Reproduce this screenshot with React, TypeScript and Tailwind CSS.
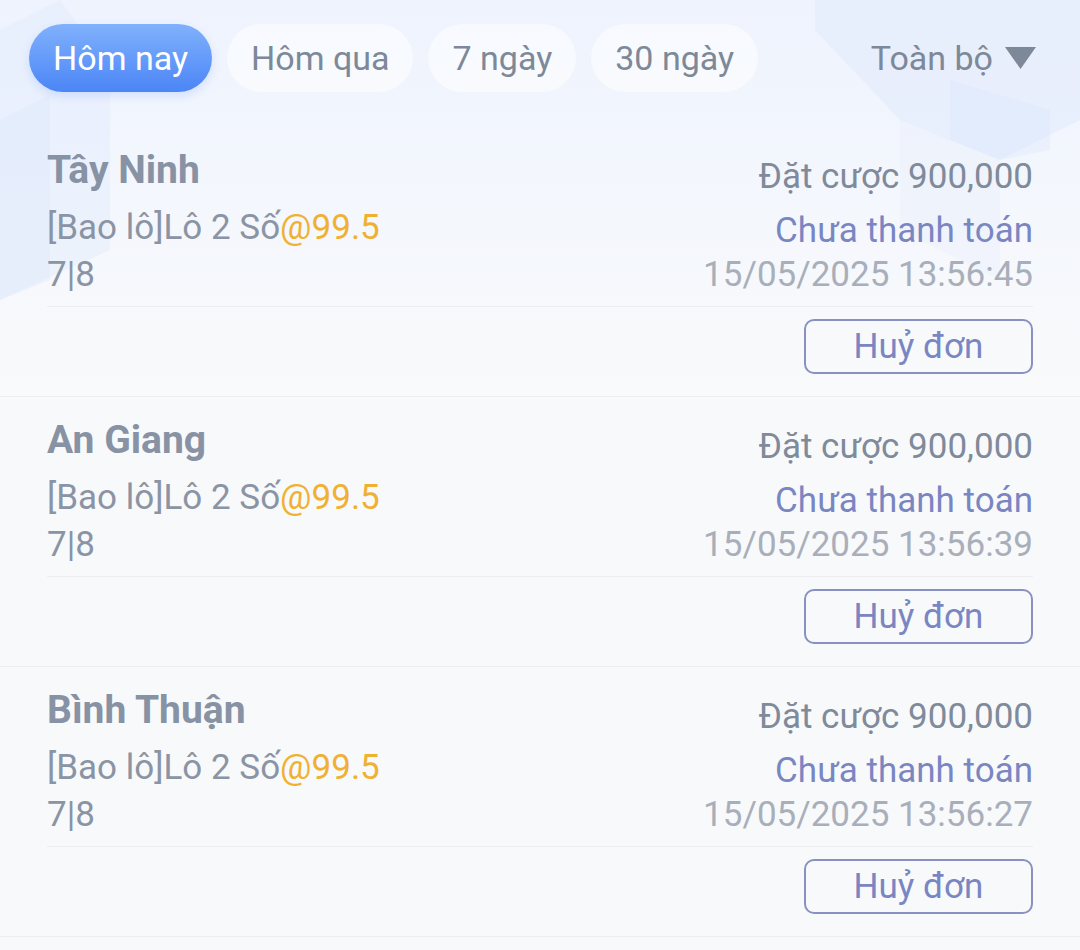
import { useState } from "react";

type Bet = {
  province: string;
  market: string;
  odds: string;
  numbers: string;
  amount: string;
  status: string;
  time: string;
};

const tabs = ["Hôm nay", "Hôm qua", "7 ngày", "30 ngày"];

const bets: Bet[] = [
  {
    province: "Tây Ninh",
    market: "[Bao lô]Lô 2 Số",
    odds: "@99.5",
    numbers: "7|8",
    amount: "900,000",
    status: "Chưa thanh toán",
    time: "15/05/2025 13:56:45",
  },
  {
    province: "An Giang",
    market: "[Bao lô]Lô 2 Số",
    odds: "@99.5",
    numbers: "7|8",
    amount: "900,000",
    status: "Chưa thanh toán",
    time: "15/05/2025 13:56:39",
  },
  {
    province: "Bình Thuận",
    market: "[Bao lô]Lô 2 Số",
    odds: "@99.5",
    numbers: "7|8",
    amount: "900,000",
    status: "Chưa thanh toán",
    time: "15/05/2025 13:56:27",
  },
];

export default function App() {
  const [activeTab, setActiveTab] = useState(0);

  return (
    <div className="relative min-h-[950px] w-full overflow-hidden bg-[#f8f9fb] font-['Roboto','Noto_Sans',sans-serif]">
      {/* soft blue backdrop behind the header */}
      <div className="absolute inset-x-0 top-0 h-[400px] bg-gradient-to-b from-[#eef3fd] via-[#f4f7fd] to-[#f9fafb]" />
      <svg className="absolute left-0 top-0" width="1080" height="400" viewBox="0 0 1080 400">
        <polygon points="0,30 60,0 110,70 110,250 0,300" fill="#dde8fb" opacity="0.35" />
        <polygon points="0,120 50,95 50,280 0,300" fill="#d4e2fb" opacity="0.25" />
        <polygon points="815,0 1080,0 1080,120 1000,160 900,120 815,30" fill="#dce7fb" opacity="0.4" />
        <polygon points="950,80 1050,110 1050,150 1000,160 950,140" fill="#d6e3fb" opacity="0.3" />
        <polygon points="900,120 1000,160 1000,280 900,230" fill="#e3ebfc" opacity="0.3" />
      </svg>

      <div className="relative">
        <div className="mb-[35px] mt-[24px] flex h-[68px] items-center pl-[29px] pr-[44px]">
          <div className="flex gap-[15px]">
            {tabs.map((tab, index) => (
              <button
                type="button"
                key={tab}
                onClick={() => setActiveTab(index)}
                className={`h-[68px] rounded-full px-[24px] text-[34px] leading-none ${
                  activeTab === index
                    ? "bg-gradient-to-b from-[#80b1fc] to-[#4c85f6] text-white shadow-[0_4px_10px_rgba(76,133,246,0.18)]"
                    : "bg-white/50 text-[#7d8898]"
                }`}
              >
                {tab}
              </button>
            ))}
          </div>
          <div className="ml-auto flex items-center gap-[12px] text-[34px] text-[#7d8898]">
            <span>Toàn bộ</span>
            <svg width="31" height="22" viewBox="0 0 31 22">
              <polygon points="0,0 31,0 15.5,22" fill="#7d8898" />
            </svg>
          </div>
        </div>

        {bets.map((bet) => (
          <BetCard key={bet.time} bet={bet} />
        ))}
      </div>
    </div>
  );
}

function BetCard({ bet }: { bet: Bet }) {
  return (
    <div className="h-[270px] border-b border-[#eceef1] px-[47px]">
      <div className="flex h-[180px] justify-between border-b border-[#eceef1]">
        <div className="pt-[14px]">
          <div className="text-[39px] font-bold leading-[58px] text-[#8792a4]">{bet.province}</div>
          <div className="text-[35px] leading-[58px] text-[#8a94a4]">
            {bet.market}
            <span className="text-[#f0b133]">{bet.odds}</span>
          </div>
          <div className="text-[35px] leading-[36px] text-[#8a94a4]">{bet.numbers}</div>
        </div>
        <div className="flex flex-col items-end pt-[30px]">
          <div className="text-[35px] leading-[40px] text-[#7f8a9a]">Đặt cược {bet.amount}</div>
          <div className="mt-[14px] text-[35px] leading-[40px] text-[#7a86c2]">{bet.status}</div>
          <div className="mt-[4px] text-[35px] leading-[40px] text-[#a9afba]">{bet.time}</div>
        </div>
      </div>
      <div className="mt-[12px] flex justify-end">
        <button
          type="button"
          className="h-[55px] w-[229px] rounded-[10px] border-2 border-[#8891c2] text-[35px] leading-none text-[#7a86c2]"
        >
          Huỷ đơn
        </button>
      </div>
    </div>
  );
}
